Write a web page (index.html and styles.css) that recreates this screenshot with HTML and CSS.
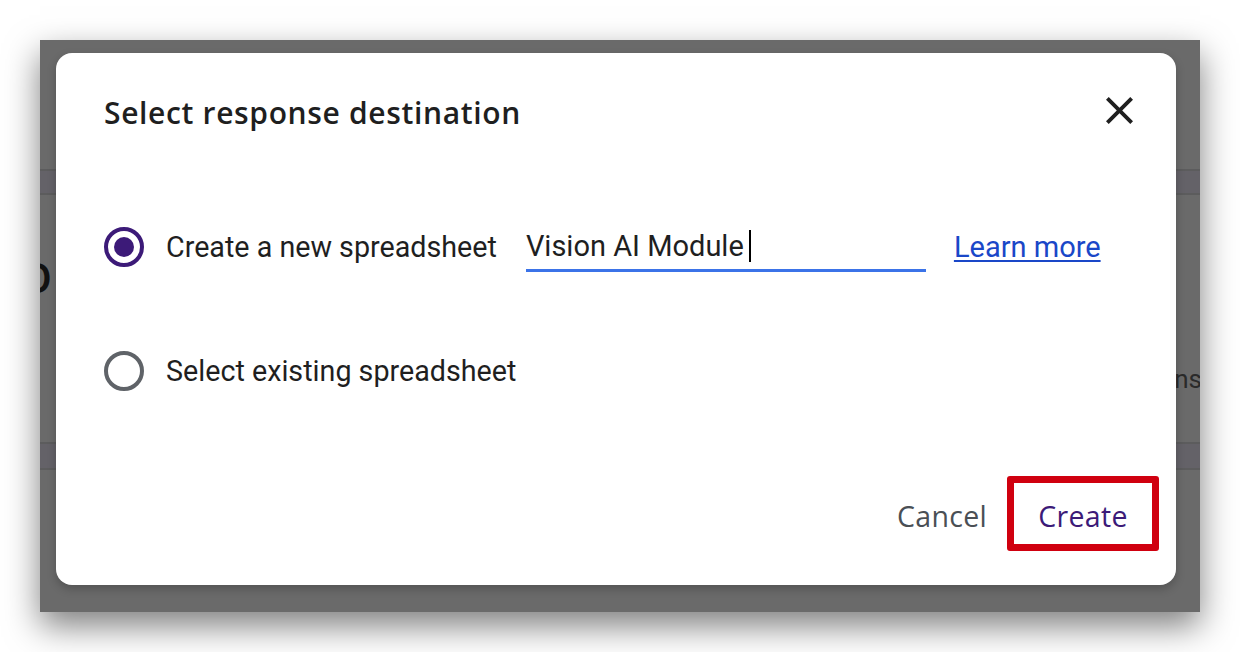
FILE: index.html
```html
<!DOCTYPE html>
<html lang="en">
<head>
<meta charset="utf-8">
<title>Select response destination</title>
<link rel="stylesheet" href="styles.css">
</head>
<body>
<div class="frame">
  <div class="page">
    <div class="stripe stripe-top"></div>
    <div class="page-heading">O</div>
    <div class="page-tab">Questions</div>
    <div class="stripe stripe-bottom"></div>
  </div>

  <div class="dialog" role="dialog" aria-label="Select response destination">
    <div class="dialog-header">
      <h1 class="dialog-title">Select response destination</h1>
      <button class="close-btn" aria-label="Close">
        <svg viewBox="5 5 14 14" width="27" height="27" aria-hidden="true"><path d="M19 6.41L17.59 5 12 10.59 6.41 5 5 6.41 10.59 12 5 17.59 6.41 19 12 13.41 17.59 19 19 17.59 13.41 12z" fill="#1f1f1f"/></svg>
      </button>
    </div>

    <div class="dialog-body">
      <div class="option-row">
        <span class="radio radio-checked"><span class="radio-dot"></span></span>
        <span class="option-label">Create a new spreadsheet</span>
        <div class="name-field"><span class="field-text">Vision AI Module</span><span class="caret"></span></div>
        <a class="learn-more" href="#">Learn more</a>
      </div>
      <div class="option-row second">
        <span class="radio"></span>
        <span class="option-label">Select existing spreadsheet</span>
      </div>
    </div>

    <div class="dialog-footer">
      <button class="btn btn-cancel">Cancel</button>
      <button class="btn btn-create">Create</button>
    </div>
  </div>
</div>
</body>
</html>
```

FILE: styles.css
```css
* { box-sizing: border-box; }

html, body {
  margin: 0;
  background: #ffffff;
}

body {
  padding: 40px;
  width: 1240px;
  height: 652px;
  overflow: hidden;
}

.frame {
  position: relative;
  width: 1160px;
  height: 572px;
  background: #6a6a6a;
  box-shadow: 0 14px 32px rgba(0, 0, 0, 0.5);
  overflow: hidden;
}

/* underlying page (dimmed) */
.page {
  display: flex;
  flex-direction: column;
  padding-top: 129px;
}

.stripe {
  height: 26px;
  background: #646268;
  border-top: 2px solid #5c5c5d;
  border-bottom: 2px solid #5c5c5d;
}

.page-heading {
  margin-top: 58px;
  margin-left: -21px;
  font-family: "Open Sans", sans-serif;
  font-weight: 600;
  font-size: 42px;
  line-height: 48px;
  color: #111111;
}

.page-tab {
  margin-top: 62px;
  margin-right: -2px;
  align-self: flex-end;
  font-family: Roboto, sans-serif;
  font-size: 26px;
  line-height: 32px;
  color: #2a2a2a;
}

.stripe-bottom {
  margin-top: 47px;
  height: 28px;
}

/* dialog */
.dialog {
  position: absolute;
  left: 16px;
  top: 13px;
  width: 1120px;
  height: 532px;
  background: #ffffff;
  border-radius: 16px;
  box-shadow: 0 4px 10px rgba(0, 0, 0, 0.22);
  display: flex;
  flex-direction: column;
}

.dialog-header {
  display: flex;
  align-items: flex-start;
  justify-content: space-between;
  padding: 40px 37px 0 48px;
}

.dialog-title {
  margin: 0;
  font-family: "Open Sans", sans-serif;
  font-weight: 600;
  font-size: 30px;
  line-height: 40px;
  color: #1f1f1f;
  letter-spacing: 0.65px;
}

.close-btn {
  width: 40px;
  height: 40px;
  margin-top: -3px;
  padding: 0;
  border: 0;
  background: transparent;
  display: flex;
  align-items: center;
  justify-content: center;
}

.dialog-body {
  display: flex;
  flex-direction: column;
  gap: 60px;
  padding: 82px 0 0 48px;
}

.option-row {
  display: flex;
  align-items: center;
  height: 64px;
}

.radio {
  flex: none;
  width: 40px;
  height: 40px;
  border-radius: 50%;
  border: 4px solid #5f6368;
  display: flex;
  align-items: center;
  justify-content: center;
}

.radio-checked {
  border-color: #3c1a78;
}

.radio-dot {
  width: 20px;
  height: 20px;
  border-radius: 50%;
  background: #3c1a78;
}

.option-label {
  margin-left: 22px;
  font-family: Roboto, sans-serif;
  font-size: 28.7px;
  line-height: 36px;
  color: #1f1f1f;
  white-space: nowrap;
}

.name-field {
  margin-left: 29px;
  margin-top: 6px;
  width: 400px;
  padding-bottom: 5px;
  border-bottom: 3px solid #3b73e8;
  display: flex;
  align-items: center;
  font-family: Roboto, sans-serif;
  font-size: 29px;
  line-height: 36px;
  color: #1f1f1f;
}

.caret {
  display: inline-block;
  width: 2px;
  height: 32px;
  margin-left: 5px;
  background: #000000;
}

.learn-more {
  margin-left: 28px;
  font-family: Roboto, sans-serif;
  font-size: 29px;
  line-height: 36px;
  color: #1a47c8;
  text-decoration: underline;
  text-underline-offset: 3px;
}

.dialog-footer {
  margin-top: auto;
  display: flex;
  align-items: center;
  justify-content: flex-end;
  gap: 20px;
  padding: 0 17px 34px 0;
}

.btn {
  border: 0;
  background: transparent;
  padding: 0;
  font-family: "Open Sans", sans-serif;
  font-weight: 500;
  font-size: 28.5px;
  line-height: 36px;
  letter-spacing: 0.3px;
}

.btn-cancel {
  color: #4a4f55;
  padding-top: 4px;
}

.btn-create {
  width: 152px;
  height: 75px;
  padding-top: 4px;
  border: 7px solid #d0000f;
  border-radius: 3px;
  color: #3c1a78;
}
```
